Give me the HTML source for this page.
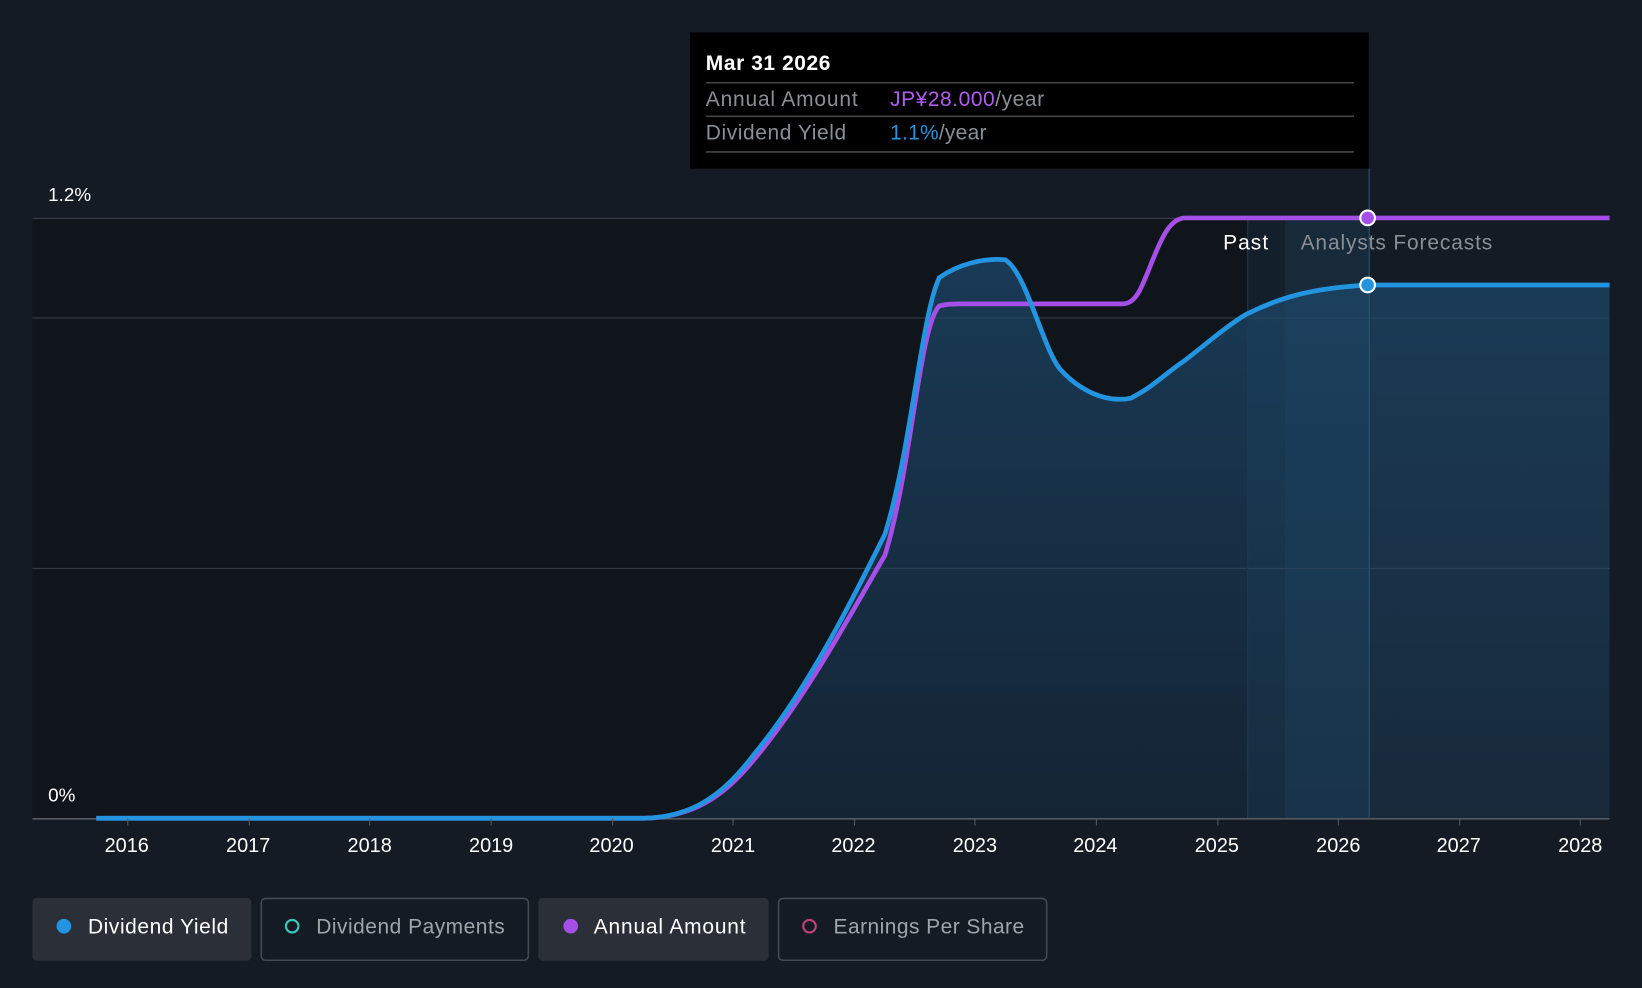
<!DOCTYPE html>
<html><head><meta charset="utf-8"><style>
html,body{margin:0;padding:0;background:#151b24;width:1642px;height:988px;overflow:hidden}
svg{display:block}
text{font-family:"Liberation Sans",sans-serif}
</style></head><body>
<svg width="1642" height="988" viewBox="0 0 1568 943" preserveAspectRatio="none">
<defs>
<linearGradient id="fg" x1="0" y1="0" x2="0" y2="1">
<stop offset="0" stop-color="#1d4a6e" stop-opacity="0.7"/>
<stop offset="1" stop-color="#1d4a6e" stop-opacity="0.3"/>
</linearGradient>
</defs>
<rect width="1568" height="943" fill="#151b24"/>
<rect x="31" y="208" width="1160" height="573" fill="#10141b"/>
<rect x="1191" y="208" width="36" height="573" fill="#13202c"/>
<rect x="1227" y="208" width="80" height="573" fill="#172a3a"/>
<g stroke="#3a3f47" stroke-width="1">
<line x1="31" y1="208.5" x2="1537" y2="208.5"/>
<line x1="31" y1="303.5" x2="1537" y2="303.5"/>
<line x1="31" y1="542.5" x2="1537" y2="542.5"/>
</g>
<path d="M92,781 L615,781 C660,780 690,760 720,720 C770,660 810,580 845,510 C870,430 880,300 897,265 C915,252 940,246 960,248 C980,260 995,330 1012,352 C1030,372 1055,385 1080,380 C1100,370 1115,355 1130,345 C1150,330 1170,312 1190,300 C1220,285 1250,275 1307,272 L1537,272 L1537,781 Z" fill="url(#fg)"/>
<line x1="1191.5" y1="208" x2="1191.5" y2="781" stroke="#1f3a50" stroke-width="1"/>
<line x1="1307.5" y1="161" x2="1307.5" y2="781" stroke="#2a5676" stroke-width="1"/>
<line x1="31" y1="781.5" x2="1537" y2="781.5" stroke="#555a62" stroke-width="1.5"/>
<path d="M92,781 L615,781 C660,780 690,762 720,725 C770,665 810,590 845,530 C870,450 878,310 897,292 C905,290 910,290 920,290 L1072,290 C1085,290 1090,275 1100,250 C1110,225 1118,208 1132,208 L1537,208" fill="none" stroke="#a64ee8" stroke-width="4.5" stroke-linejoin="round"/>
<path d="M92,781 L615,781 C660,780 690,760 720,720 C770,660 810,580 845,510 C870,430 880,300 897,265 C915,252 940,246 960,248 C980,260 995,330 1012,352 C1030,372 1055,385 1080,380 C1100,370 1115,355 1130,345 C1150,330 1170,312 1190,300 C1220,285 1250,275 1307,272 L1537,272" fill="none" stroke="#2394e0" stroke-width="4.5" stroke-linejoin="round"/>
<circle cx="1306" cy="208" r="7" fill="#a64ee8" stroke="#fff" stroke-width="2"/>
<circle cx="1306" cy="272" r="7" fill="#2394e0" stroke="#fff" stroke-width="2"/>
<g stroke="#555a62"><line x1="122" y1="781" x2="122" y2="788"/><line x1="238" y1="781" x2="238" y2="788"/><line x1="353" y1="781" x2="353" y2="788"/><line x1="469" y1="781" x2="469" y2="788"/><line x1="585" y1="781" x2="585" y2="788"/><line x1="700" y1="781" x2="700" y2="788"/><line x1="816" y1="781" x2="816" y2="788"/><line x1="931" y1="781" x2="931" y2="788"/><line x1="1047" y1="781" x2="1047" y2="788"/><line x1="1163" y1="781" x2="1163" y2="788"/><line x1="1278" y1="781" x2="1278" y2="788"/><line x1="1394" y1="781" x2="1394" y2="788"/><line x1="1509" y1="781" x2="1509" y2="788"/></g>
<g fill="#ffffff" font-size="19" text-anchor="middle">
<text x="121" y="813">2016</text><text x="237" y="813">2017</text><text x="353" y="813">2018</text><text x="469" y="813">2019</text><text x="584" y="813">2020</text><text x="700" y="813">2021</text><text x="815" y="813">2022</text><text x="931" y="813">2023</text><text x="1046" y="813">2024</text><text x="1162" y="813">2025</text><text x="1278" y="813">2026</text><text x="1393" y="813">2027</text><text x="1509" y="813">2028</text>
</g>
<text x="46" y="192" fill="#fff" font-size="18">1.2%</text>
<text x="46" y="765" fill="#fff" font-size="18">0%</text>
<text x="1168" y="238" fill="#fff" font-size="20" textLength="43">Past</text>
<text x="1242" y="238" fill="#8a8f96" font-size="20" textLength="183">Analysts Forecasts</text>
<rect x="659" y="31" width="648" height="130" fill="#000"/>
<text x="674" y="67" fill="#fff" font-size="20" font-weight="bold" textLength="119">Mar 31 2026</text>
<g stroke="#444" stroke-width="1.5"><line x1="674" y1="79" x2="1293" y2="79"/><line x1="674" y1="111" x2="1293" y2="111"/><line x1="674" y1="145" x2="1293" y2="145"/></g>
<text x="674" y="101" fill="#8a8f96" font-size="20" textLength="145">Annual Amount</text>
<text x="850" y="101" font-size="20" textLength="147"><tspan fill="#b05ef0">JP¥28.000</tspan><tspan fill="#8a8f96">/year</tspan></text>
<text x="674" y="133" fill="#8a8f96" font-size="20" textLength="134">Dividend Yield</text>
<text x="850" y="133" font-size="20" textLength="92"><tspan fill="#2394e0">1.1%</tspan><tspan fill="#8a8f96">/year</tspan></text>
<rect x="31" y="857" width="209" height="60" rx="4" fill="#2a2f38"/>
<circle cx="61" cy="884" r="7" fill="#2394e0"/>
<text x="84" y="891" fill="#fff" font-size="20" textLength="134">Dividend Yield</text>
<rect x="249.5" y="857.5" width="255" height="59" rx="4" fill="none" stroke="#444a53" stroke-width="1.5"/>
<circle cx="279" cy="884" r="6" fill="none" stroke="#3cc8b8" stroke-width="2"/>
<text x="302" y="891" fill="#a0a5ab" font-size="20" textLength="180">Dividend Payments</text>
<rect x="514" y="857" width="220" height="60" rx="4" fill="#2a2f38"/>
<circle cx="545" cy="884" r="7" fill="#a64ee8"/>
<text x="567" y="891" fill="#fff" font-size="20" textLength="145">Annual Amount</text>
<rect x="743.5" y="857.5" width="256" height="59" rx="4" fill="none" stroke="#444a53" stroke-width="1.5"/>
<circle cx="773" cy="884" r="6" fill="none" stroke="#c0407a" stroke-width="2"/>
<text x="796" y="891" fill="#a0a5ab" font-size="20" textLength="182">Earnings Per Share</text>
</svg>
</body></html>
